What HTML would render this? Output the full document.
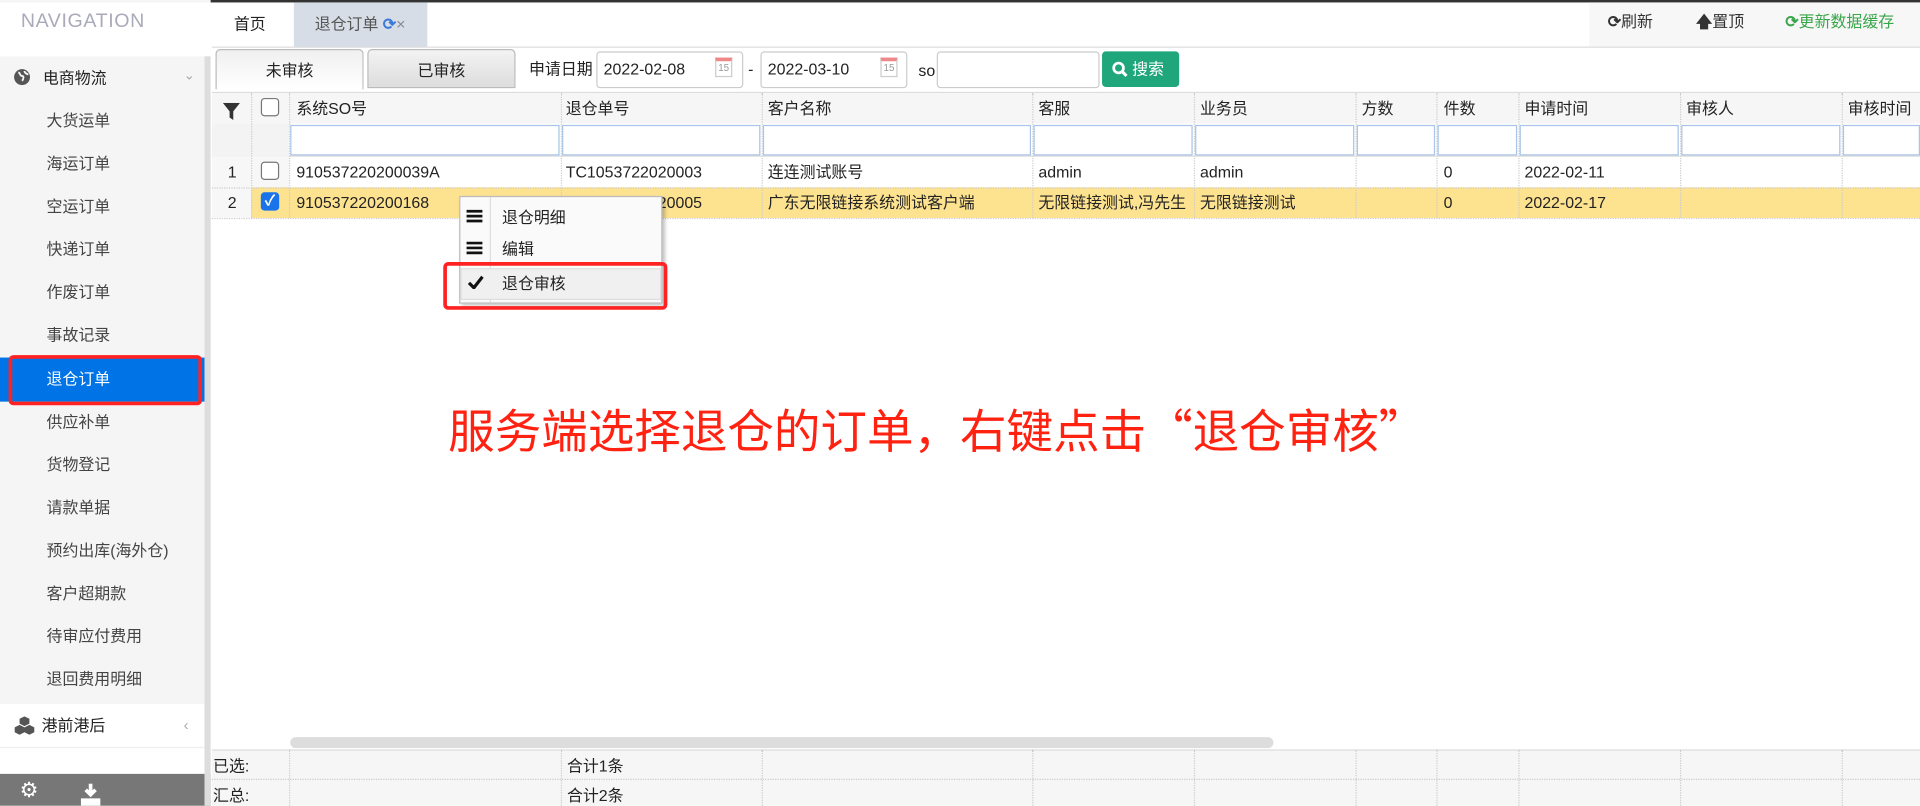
<!DOCTYPE html>
<html><head><meta charset="utf-8">
<style>
*{box-sizing:border-box;margin:0;padding:0}
html,body{width:1920px;height:806px;overflow:hidden;background:#fff}
body{font-family:"Liberation Sans","Noto Sans CJK SC",sans-serif;color:#222}
#w{position:absolute;left:0;top:0;width:1568px;height:658px;transform:scale(1.22449);transform-origin:0 0;font-size:13px;line-height:16px}
.a{position:absolute}
#side{left:0;top:0;width:172px;height:658px;background:#f5f5f5}
.nav{left:17px;top:10px;font-size:16px;color:#aab;letter-spacing:.5px}
.it{position:absolute;left:38px;font-size:13px;color:#444;height:35px;line-height:35px}
.col{position:absolute;top:0;border-left:1px dotted #ccc;height:102px}
.fi{position:absolute;top:26px;height:25px;border:1px solid #a9c4e8;background:#fff}
</style></head><body><div id="w">
<div class="a" style="left:0;top:0;width:1568px;height:2px;background:#333"></div>
<div id="side" class="a">
 <div class="a" style="left:0;top:2px;width:172px;height:44px;background:#fff"></div>
 <div class="a nav">NAVIGATION</div>
 <svg class="a" style="left:11px;top:56px" width="14" height="14" viewBox="0 0 14 14"><circle cx="7" cy="7" r="6.5" fill="#555"/><path d="M4 3c2 1 1 3 3 3s1 3 0 4M9 2c0 2 2 2 3 3" stroke="#f5f5f5" stroke-width="1.5" fill="none"/></svg>
 <div class="a" style="left:35px;top:46px;height:35px;line-height:35px;font-size:13px;color:#222">电商物流</div>
 <div class="a" style="left:150px;top:54px;color:#aaa;font-size:11px">⌄</div>
 <div class="it" style="top:81px">大货运单</div>
 <div class="it" style="top:116px">海运订单</div>
 <div class="it" style="top:151px">空运订单</div>
 <div class="it" style="top:186px">快递订单</div>
 <div class="it" style="top:221px">作废订单</div>
 <div class="it" style="top:256px">事故记录</div>
 <div class="a" style="left:0;top:292px;width:170px;height:36px;background:#0073e6"></div>
 <div class="a" style="left:7px;top:290px;width:158px;height:41px;border:3px solid #f22;border-radius:4px"></div>
 <div class="it" style="top:292px;color:#fff">退仓订单</div>
 <div class="it" style="top:327px">供应补单</div>
 <div class="it" style="top:362px">货物登记</div>
 <div class="it" style="top:397px">请款单据</div>
 <div class="it" style="top:432px">预约出库(海外仓)</div>
 <div class="it" style="top:467px">客户超期款</div>
 <div class="it" style="top:502px">待审应付费用</div>
 <div class="it" style="top:537px">退回费用明细</div>
 <div class="a" style="left:0;top:575px;width:168px;height:36px;background:#fff;border-bottom:1px solid #eee"></div>
 <svg class="a" style="left:11px;top:585px" width="18" height="16" viewBox="0 0 18 16"><g fill="#555"><path d="M9 0l4 2v4l-4 2-4-2V2z"/><path d="M5 7l4 2v4l-4 2-4-2V9z"/><path d="M13 7l4 2v4l-4 2-4-2V9z"/></g></svg>
 <div class="a" style="left:34px;top:575px;height:36px;line-height:36px;font-size:13px;color:#222">港前港后</div>
 <div class="a" style="left:150px;top:584px;color:#aaa;font-size:12px">‹</div>
 <div class="a" style="left:0;top:611px;width:168px;height:21px;background:#fff"></div>
 <div class="a" style="left:0;top:632px;width:172px;height:26px;background:#777"></div>
 <div class="a" style="left:16px;top:638px;color:#fff;font-size:17px">&#x2699;</div>
 <svg class="a" style="left:66px;top:640px" width="16" height="18"><path d="M8 0v9M4 5l4 4 4-4" stroke="#fff" stroke-width="3" fill="none"/><rect x="0" y="12" width="16" height="6" fill="#fff"/></svg>
 <div class="a" style="left:167px;top:46px;width:5px;height:612px;background:#ddd"></div>
</div>
<!-- tabs -->
<div class="a" style="left:191px;top:12px;font-size:13px">首页</div>
<div class="a" style="left:240px;top:2px;width:109px;height:36px;background:#d6dde6"></div>
<div class="a" style="left:257px;top:12px;font-size:13px;color:#555">退仓订单 <span style="color:#3a7ad8;font-weight:bold">⟳</span><span style="color:#888">×</span></div>
<div class="a" style="left:1298px;top:2px;width:270px;height:36px;background:#f7f7f7"></div>
<div class="a" style="left:1313px;top:10px;font-size:13px;color:#333"><b>⟳</b>刷新</div>
<div class="a" style="left:1385px;top:10px;font-size:13px;color:#333"><b>🡅</b>置顶</div>
<div class="a" style="left:1458px;top:10px;font-size:13px;color:#3aa64a"><b>⟳</b>更新数据缓存</div>
<div class="a" style="left:173px;top:38px;width:1395px;height:1px;background:#ddd"></div>
<!-- toolbar -->
<div class="a" style="left:176px;top:40px;width:121px;height:33px;border:1px solid #bbb;border-bottom:none;border-radius:4px 4px 0 0;background:linear-gradient(#f0f0f0,#fff);text-align:center;line-height:34px">未审核</div>
<div class="a" style="left:300px;top:40px;width:121px;height:32px;border:1px solid #bbb;border-radius:4px 4px 0 0;background:linear-gradient(#f3f3f3,#ddd);text-align:center;line-height:34px">已审核</div>
<div class="a" style="left:432px;top:49px">申请日期</div>
<div class="a" style="left:487px;top:42px;width:120px;height:30px;border:1px solid #ccc;border-radius:3px;padding-left:5px;line-height:28px;font-size:13px">2022-02-08</div>
<div class="a" style="left:584px;top:47px;width:14px;height:16px;border:1px solid #ccc;border-top:3px solid #e88;font-size:8px;line-height:12px;color:#999;text-align:center">15</div>
<div class="a" style="left:611px;top:49px">-</div>
<div class="a" style="left:621px;top:42px;width:120px;height:30px;border:1px solid #ccc;border-radius:3px;padding-left:5px;line-height:28px">2022-03-10</div>
<div class="a" style="left:719px;top:47px;width:14px;height:16px;border:1px solid #ccc;border-top:3px solid #e88;font-size:8px;line-height:12px;color:#999;text-align:center">15</div>
<div class="a" style="left:750px;top:50px">so</div>
<div class="a" style="left:765px;top:42px;width:133px;height:30px;border:1px solid #ccc;border-radius:3px"></div>
<div class="a" style="left:900px;top:42px;width:63px;height:29px;background:#1fa67a;border-radius:3px;color:#fff;line-height:29px;padding-left:8px"><svg width="13" height="13" style="vertical-align:-2px"><circle cx="5.5" cy="5.5" r="4" stroke="#fff" stroke-width="2.2" fill="none"/><path d="M8.5 8.5l3.5 3.5" stroke="#fff" stroke-width="2.5"/></svg> 搜索</div>
<div class="a" style="left:173px;top:75px;width:1395px;height:1px;background:#ddd"></div>
<!-- grid -->
<div class="a" style="left:173px;top:76px;width:1395px;height:25px;background:#f6f6f6"></div>
<div class="a" style="left:173px;top:101px;width:1395px;height:27px;background:#fff;border-bottom:1px solid #ddd"></div>
<div class="a" style="left:173px;top:101px;width:63px;height:27px;background:#f3f3f3"></div>
<div class="a" style="left:173px;top:128px;width:63px;height:50px;background:#f7f7f7"></div>
<div class="a" style="left:205px;top:153px;width:1363px;height:25px;background:#fde28f"></div>
<div class="a" style="left:173px;top:153px;width:1395px;height:1px;border-top:1px dotted #ccc"></div>
<div class="a" style="left:173px;top:178px;width:1395px;height:1px;border-top:1px dotted #ccc"></div>
<div class="a" style="left:0;top:0">
 <div class="col" style="left:205px;top:76px"></div><div class="col" style="left:236px;top:76px"></div>
 <div class="col" style="left:458px;top:76px"></div><div class="col" style="left:622px;top:76px"></div>
 <div class="col" style="left:843px;top:76px"></div><div class="col" style="left:975px;top:76px"></div>
 <div class="col" style="left:1107px;top:76px"></div><div class="col" style="left:1173px;top:76px"></div>
 <div class="col" style="left:1240px;top:76px"></div><div class="col" style="left:1372px;top:76px"></div>
 <div class="col" style="left:1504px;top:76px"></div>
</div>
<svg class="a" style="left:182px;top:84px" width="14" height="14"><path d="M0 0h14L8.5 7v7L5.5 12V7z" fill="#333"/></svg>
<div class="a" style="left:213px;top:80px;width:15px;height:15px;border:1px solid #777;border-radius:3px;background:#fff"></div>
<div class="a" style="left:242px;top:81px">系统SO号</div><div class="a" style="left:462px;top:81px">退仓单号</div>
<div class="a" style="left:627px;top:81px">客户名称</div><div class="a" style="left:848px;top:81px">客服</div>
<div class="a" style="left:980px;top:81px">业务员</div><div class="a" style="left:1112px;top:81px">方数</div>
<div class="a" style="left:1179px;top:81px">件数</div><div class="a" style="left:1245px;top:81px">申请时间</div>
<div class="a" style="left:1377px;top:81px">审核人</div><div class="a" style="left:1509px;top:81px">审核时间</div>
<div class="fi" style="left:237px;top:102px;width:220px"></div><div class="fi" style="left:459px;top:102px;width:162px"></div>
<div class="fi" style="left:623px;top:102px;width:219px"></div><div class="fi" style="left:844px;top:102px;width:130px"></div>
<div class="fi" style="left:976px;top:102px;width:130px"></div><div class="fi" style="left:1108px;top:102px;width:64px"></div>
<div class="fi" style="left:1174px;top:102px;width:65px"></div><div class="fi" style="left:1241px;top:102px;width:130px"></div>
<div class="fi" style="left:1373px;top:102px;width:130px"></div><div class="fi" style="left:1505px;top:102px;width:63px"></div>
<div class="a" style="left:186px;top:133px">1</div>
<div class="a" style="left:213px;top:132px;width:15px;height:15px;border:1px solid #777;border-radius:3px;background:#fff"></div>
<div class="a" style="left:242px;top:133px">910537220200039A</div><div class="a" style="left:462px;top:133px">TC1053722020003</div>
<div class="a" style="left:627px;top:133px">连连测试账号</div><div class="a" style="left:848px;top:133px">admin</div>
<div class="a" style="left:980px;top:133px">admin</div><div class="a" style="left:1179px;top:133px">0</div><div class="a" style="left:1245px;top:133px">2022-02-11</div>
<div class="a" style="left:186px;top:158px">2</div>
<div class="a" style="left:213px;top:157px;width:15px;height:15px;border-radius:3px;background:#1a73e8;color:#fff;font-size:12px;line-height:15px;text-align:center;font-weight:bold">✓</div>
<div class="a" style="left:242px;top:158px">910537220200168</div><div class="a" style="left:462px;top:158px">TC1053722020005</div>
<div class="a" style="left:627px;top:158px">广东无限链接系统测试客户端</div><div class="a" style="left:848px;top:158px;width:126px;overflow:hidden;white-space:nowrap">无限链接测试,冯先生</div>
<div class="a" style="left:980px;top:158px">无限链接测试</div><div class="a" style="left:1179px;top:158px">0</div><div class="a" style="left:1245px;top:158px">2022-02-17</div>
<!-- context menu -->
<div class="a" style="left:375px;top:160px;width:166px;height:88px;background:#fafafa;border:1px solid #bbb;box-shadow:2px 2px 3px rgba(0,0,0,.25)"></div>
<div class="a" style="left:400px;top:161px;width:1px;height:86px;background:#ddd"></div>
<div class="a" style="left:376px;top:219px;width:164px;height:26px;background:#f0f0f0;border:1px solid #ddd"></div>
<svg class="a" style="left:381px;top:171px" width="13" height="11"><path d="M0 1.5h13M0 5.5h13M0 9.5h13" stroke="#111" stroke-width="2.2"/></svg><div class="a" style="left:410px;top:170px">退仓明细</div>
<svg class="a" style="left:381px;top:197px" width="13" height="11"><path d="M0 1.5h13M0 5.5h13M0 9.5h13" stroke="#111" stroke-width="2.2"/></svg><div class="a" style="left:410px;top:196px">编辑</div>
<svg class="a" style="left:382px;top:225px" width="13" height="11"><path d="M1 6l4 4 7-9" stroke="#111" stroke-width="2.6" fill="none"/></svg><div class="a" style="left:410px;top:224px">退仓审核</div>
<div class="a" style="left:362px;top:214px;width:183px;height:39px;border:3px solid #f22;border-radius:4px"></div>
<div class="a" style="left:366px;top:328px;font-family:'Noto Sans CJK SC',sans-serif;font-size:38px;line-height:44px;color:#f21;white-space:nowrap">服务端选择退仓的订单，右键点击“退仓审核”</div>
<!-- scrollbar + footer -->
<div class="a" style="left:237px;top:602px;width:803px;height:9px;background:#ddd;border-radius:5px"></div>
<div class="a" style="left:173px;top:612px;width:1395px;height:46px;background:#f6f6f6;border-top:1px solid #ddd"></div>
<div class="a" style="left:173px;top:636px;width:1395px;height:1px;border-top:1px dotted #ccc"></div>
<div class="a" style="left:0;top:0">
 <div class="col" style="left:236px;top:612px;height:46px"></div><div class="col" style="left:458px;top:612px;height:46px"></div>
 <div class="col" style="left:622px;top:612px;height:46px"></div><div class="col" style="left:843px;top:612px;height:46px"></div>
 <div class="col" style="left:975px;top:612px;height:46px"></div><div class="col" style="left:1107px;top:612px;height:46px"></div>
 <div class="col" style="left:1173px;top:612px;height:46px"></div><div class="col" style="left:1240px;top:612px;height:46px"></div>
 <div class="col" style="left:1372px;top:612px;height:46px"></div><div class="col" style="left:1504px;top:612px;height:46px"></div>
</div>
<div class="a" style="left:174px;top:618px">已选:</div><div class="a" style="left:463px;top:618px">合计1条</div>
<div class="a" style="left:174px;top:642px">汇总:</div><div class="a" style="left:463px;top:642px">合计2条</div>
</div></body></html>
